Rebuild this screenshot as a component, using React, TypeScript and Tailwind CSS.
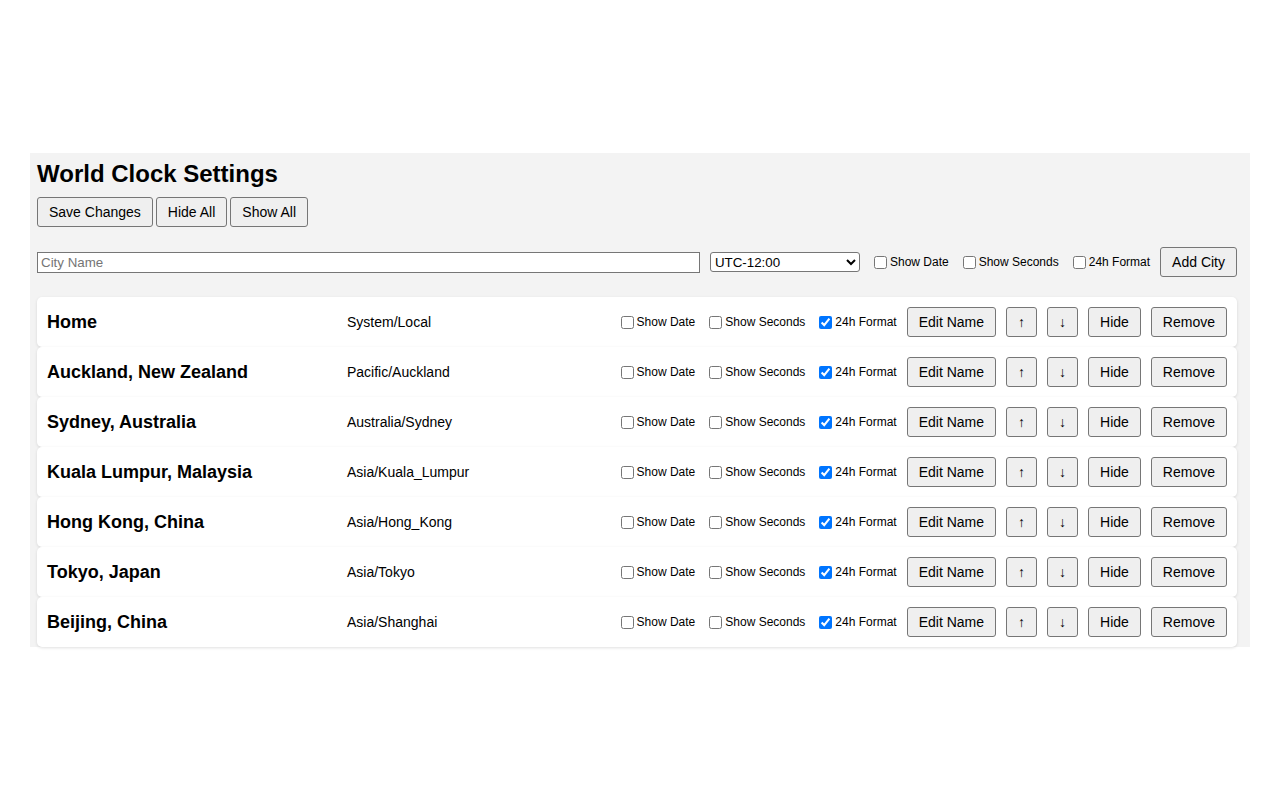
import React from 'react';

type City = { name: string; zone: string };

const cities: City[] = [
  { name: 'Home', zone: 'System/Local' },
  { name: 'Auckland, New Zealand', zone: 'Pacific/Auckland' },
  { name: 'Sydney, Australia', zone: 'Australia/Sydney' },
  { name: 'Kuala Lumpur, Malaysia', zone: 'Asia/Kuala_Lumpur' },
  { name: 'Hong Kong, China', zone: 'Asia/Hong_Kong' },
  { name: 'Tokyo, Japan', zone: 'Asia/Tokyo' },
  { name: 'Beijing, China', zone: 'Asia/Shanghai' },
];

const Btn: React.FC<{ children: React.ReactNode }> = ({ children }) => (
  <button className="shrink-0 bg-[#efefef] border border-[#767676] rounded-[3px] px-[11px] py-[6px] text-[14px] leading-[16px] text-black whitespace-nowrap">
    {children}
  </button>
);

const Check: React.FC<{ label: string; checked?: boolean }> = ({ label, checked }) => (
  <label className="flex items-center shrink-0 text-[12px] leading-[14px] whitespace-nowrap">
    <input type="checkbox" defaultChecked={checked} className="w-[13px] h-[13px] mt-[3px] mb-[3px] ml-[4px] mr-[3px]" />
    {label}
  </label>
);

const App: React.FC = () => {
  return (
    <div className="min-h-screen flex items-center px-[30px] bg-white font-['Liberation_Sans',Arial,sans-serif] text-black">
      <div className="w-full bg-[#f3f3f3] pt-[7px] pl-[7px] pr-[13px]">
        <h2 className="text-[24px] leading-[28px] font-bold mb-[9px]">World Clock Settings</h2>

        <div className="flex gap-[3px]">
          <Btn>Save Changes</Btn>
          <Btn>Hide All</Btn>
          <Btn>Show All</Btn>
        </div>

        {/* Add city */}
        <div className="flex items-center gap-[10px] mt-[20px]">
          <input
            type="text"
            placeholder="City Name"
            className="flex-1 h-[21px] bg-white border border-[#767676] px-[3px] text-[13.33px] leading-[15px] placeholder:text-[#757575]"
          />
          <select className="w-[150px] h-[20px] bg-white border border-[#767676] rounded-[3px] text-[13.33px] leading-[15px]">
            <option>UTC-12:00</option>
            <option>UTC-11:00</option>
            <option>UTC+00:00</option>
          </select>
          <Check label="Show Date" />
          <Check label="Show Seconds" />
          <Check label="24h Format" />
          <Btn>Add City</Btn>
        </div>

        {/* City rows */}
        <div className="mt-[20px]">
          {cities.map((c) => (
            <div
              key={c.name}
              className="flex items-center h-[50px] px-[10px] bg-white rounded-[5px] shadow-[0_1px_3px_rgba(0,0,0,0.12)]"
            >
              <div className="w-[300px] shrink-0 text-[18px] font-bold">{c.name}</div>
              <div className="flex-1 text-[14px]">{c.zone}</div>
              <div className="flex items-center gap-[10px]">
                <Check label="Show Date" />
                <Check label="Show Seconds" />
                <Check label="24h Format" checked />
                <Btn>Edit Name</Btn>
                <Btn>↑</Btn>
                <Btn>↓</Btn>
                <Btn>Hide</Btn>
                <Btn>Remove</Btn>
              </div>
            </div>
          ))}
        </div>
      </div>
    </div>
  );
};

export default App;
